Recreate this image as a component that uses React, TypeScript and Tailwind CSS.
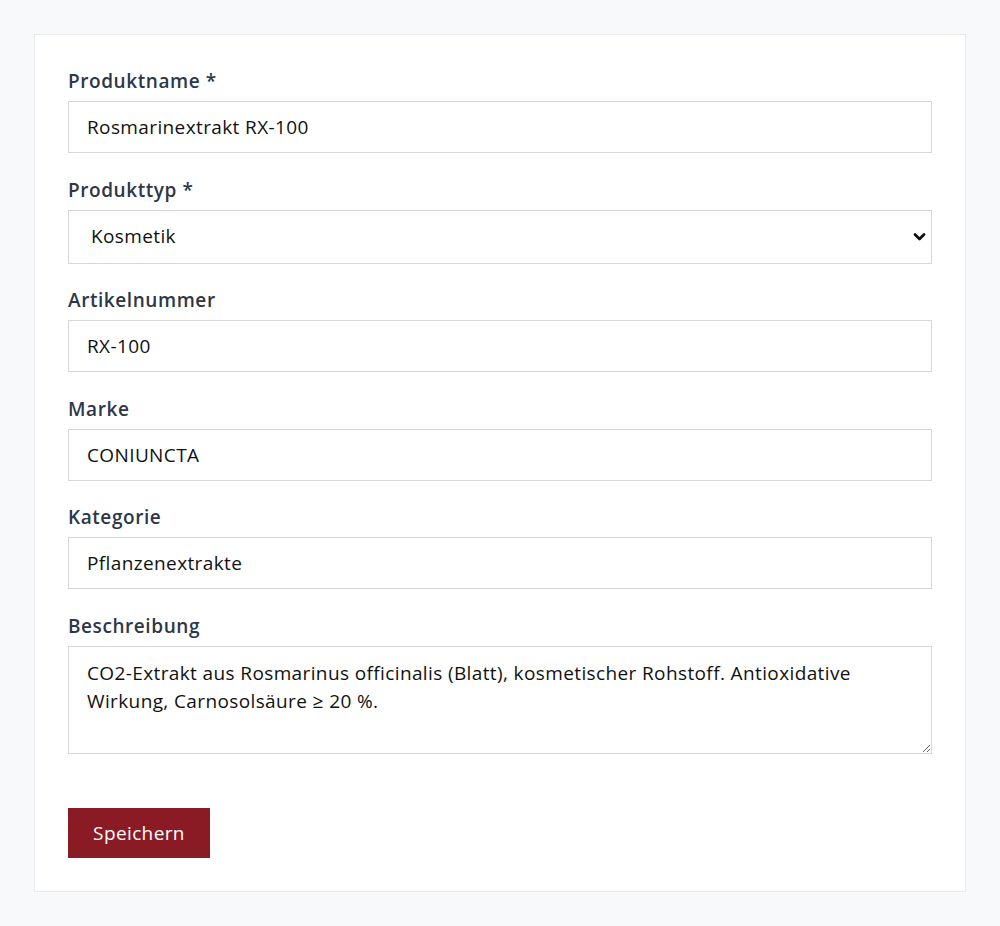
import { ReactNode } from "react";

const font = { fontFamily: '"Open Sans", "Noto Sans", sans-serif' };

function Field({ label, children }: { label: string; children: ReactNode }) {
  return (
    <div className="mb-[23.5px] flex flex-col">
      <label className="mb-[6px] text-[19px] leading-[27px] font-semibold tracking-[0.03em] text-[#2d3748]">
        {label}
      </label>
      {children}
    </div>
  );
}

const inputCls =
  "h-[52px] w-full border border-[#d6d6d6] bg-white px-[18px] text-[19px] tracking-[0.02em] text-[#111] outline-none";

export default function App() {
  return (
    <div className="min-h-screen bg-[#f8f9fb] p-[34px]" style={font}>
      <div className="border border-[#e6e8eb] bg-white p-[33px]">
        <form onSubmit={(e) => e.preventDefault()}>
          <Field label="Produktname *">
            <input className={inputCls} defaultValue="Rosmarinextrakt RX-100" />
          </Field>

          <Field label="Produkttyp *">
            <div className="relative">
              <select
                defaultValue="Kosmetik"
                className="h-[54px] w-full appearance-none border border-[#d6d6d6] bg-white px-[22px] text-[19px] tracking-[0.02em] text-[#111] outline-none"
              >
                <option>Kosmetik</option>
                <option>Lebensmittel</option>
                <option>Pharma</option>
              </select>
              <svg
                className="pointer-events-none absolute right-[6px] top-1/2 h-[10px] w-[13px] -translate-y-1/2"
                viewBox="0 0 13 10"
                fill="none"
              >
                <path d="M2 2.5 L6.5 7 L11 2.5" stroke="#111" strokeWidth="2.8" strokeLinecap="round" strokeLinejoin="round" />
              </svg>
            </div>
          </Field>

          <Field label="Artikelnummer">
            <input className={inputCls} defaultValue="RX-100" />
          </Field>

          <Field label="Marke">
            <input className={inputCls} defaultValue="CONIUNCTA" />
          </Field>

          <Field label="Kategorie">
            <input className={inputCls} defaultValue="Pflanzenextrakte" />
          </Field>

          <Field label="Beschreibung">
            <textarea
              className="h-[108px] w-full border border-[#d6d6d6] bg-white px-[18px] py-[12px] text-[19px] leading-[28px] tracking-[0.02em] text-[#111] outline-none"
              defaultValue="CO2-Extrakt aus Rosmarinus officinalis (Blatt), kosmetischer Rohstoff. Antioxidative Wirkung, Carnosolsäure ≥ 20 %."
            />
          </Field>

          <div className="pt-[31px]">
            <button
              type="submit"
              className="h-[50px] w-[142px] bg-[#8a1b24] text-[19px] tracking-[0.02em] text-white"
            >
              Speichern
            </button>
          </div>
        </form>
      </div>
    </div>
  );
}
